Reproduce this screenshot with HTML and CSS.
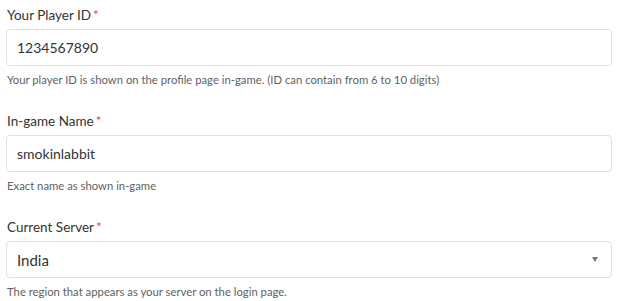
FILE: index.html
```html
<!DOCTYPE html>
<html>
    <head>
        <title>Player Details</title>
        <meta charset="utf-8">
        <link rel="stylesheet" href="styles.css">
    </head>
    <body>
        <form class="pf-form">
            <div class="pf-field">
                <label class="pf-field__label" for="playerId">Your Player ID<span class="pf-field__req">*</span></label>
                <input class="pf-field__input" type="text" id="playerId" value="1234567890">
                <p class="pf-field__help">Your player ID is shown on the profile page in-game. (ID can contain from 6 to 10 digits)</p>
            </div>

            <div class="pf-field">
                <label class="pf-field__label" for="playerName">In-game Name<span class="pf-field__req">*</span></label>
                <input class="pf-field__input" type="text" id="playerName" value="smokinlabbit">
                <p class="pf-field__help">Exact name as shown in-game</p>
            </div>

            <div class="pf-field">
                <label class="pf-field__label" for="server">Current Server<span class="pf-field__req">*</span></label>
                <div class="pf-select">
                    <select class="pf-field__input pf-select__control" id="server">
                        <option>India</option>
                    </select>
                    <span class="pf-select__arrow"></span>
                </div>
                <p class="pf-field__help">The region that appears as your server on the login page.</p>
            </div>
        </form>
    </body>
</html>
```

FILE: styles.css
```css
* {
    box-sizing: border-box;
}

body {
    margin: 0;
    padding: 5px 8px 0 6px;
    background: #fff;
    font-family: Lato, "Liberation Sans", sans-serif;
    color: #333;
}

.pf-form {
    display: flex;
    flex-direction: column;
    gap: 22px;
}

.pf-field {
    display: flex;
    flex-direction: column;
}

.pf-field__label {
    display: block;
    padding-left: 1px;
    margin-bottom: 4px;
    font-size: 13.5px;
    line-height: 20px;
    color: #333;
}

.pf-field__req {
    color: #e0474c;
    margin-left: 2px;
}

.pf-field__input {
    width: 100%;
    height: 37px;
    padding: 0 10px;
    border: 1px solid #e0e0e0;
    border-radius: 4px;
    background: #fff;
    font-family: inherit;
    font-size: 14px;
    color: #333;
    outline: none;
}

.pf-field__help {
    margin: 5px 0 0 0;
    padding-left: 1px;
    font-size: 11.3px;
    line-height: 18px;
    color: #5f5f5f;
}

.pf-select {
    position: relative;
}

.pf-select__control {
    -webkit-appearance: none;
    appearance: none;
    font-size: 15px;
}

.pf-select__arrow {
    position: absolute;
    right: 14px;
    top: 16px;
    width: 0;
    height: 0;
    border-left: 3px solid transparent;
    border-right: 3px solid transparent;
    border-top: 5px solid #777;
    pointer-events: none;
}
```
